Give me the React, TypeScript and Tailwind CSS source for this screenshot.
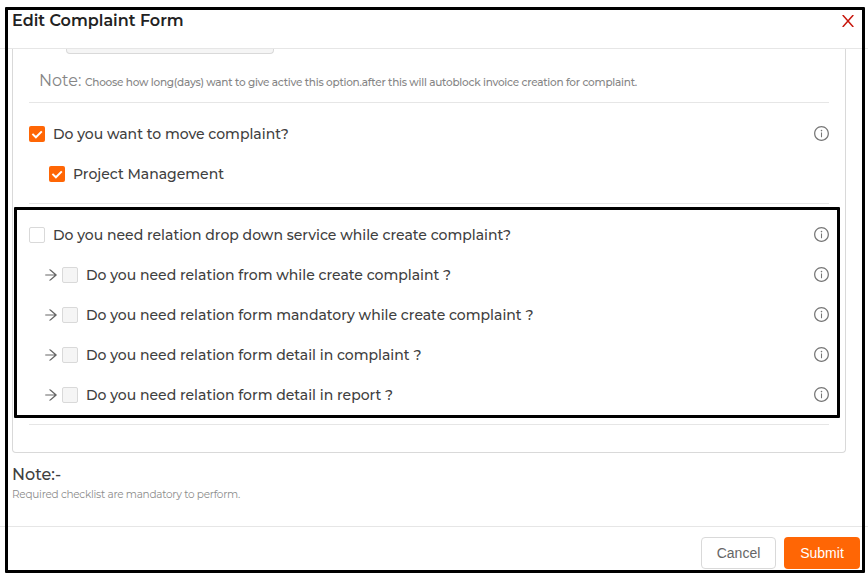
import { AiOutlineArrowRight, AiOutlineInfoCircle } from "react-icons/ai";

function Checkbox({ state }: { state: "checked" | "empty" | "disabled" }) {
  if (state === "checked") {
    return (
      <span className="flex size-4 shrink-0 items-center justify-center rounded-[2px] bg-[#ff6605]">
        <svg viewBox="0 0 16 16" className="size-4" fill="none" stroke="#fff" strokeWidth="2">
          <path d="M3.4 7.9 6.9 11.3 12.8 5.4" />
        </svg>
      </span>
    );
  }
  return (
    <span
      className={
        state === "empty"
          ? "size-4 shrink-0 rounded-[2px] border border-[#d9d9d9] bg-white"
          : "size-4 shrink-0 rounded-[2px] border border-[#d9d9d9] bg-[#f5f5f5]"
      }
    />
  );
}

type RowProps = {
  label: string;
  state: "checked" | "empty" | "disabled";
  indent?: string;
  arrow?: boolean;
  info?: boolean;
};

function Row({ label, state, indent = "", arrow = false, info = true }: RowProps) {
  return (
    <div className={`flex h-10 items-center ${indent}`}>
      {arrow && <AiOutlineArrowRight className="mr-[3px] size-4 shrink-0 text-[#666]" />}
      <Checkbox state={state} />
      <span className="ml-2 text-[14px] font-medium whitespace-nowrap text-[#404040]">{label}</span>
      {info && <AiOutlineInfoCircle className="-mr-px mb-px ml-auto size-[17px] text-[#777]" />}
    </div>
  );
}

const relationRows = [
  "Do you need relation from while create complaint ?",
  "Do you need relation form mandatory while create complaint ?",
  "Do you need relation form detail in complaint ?",
  "Do you need relation form detail in report ?",
];

export default function App() {
  return (
    <div className="relative flex h-[575px] w-[868px] flex-col overflow-hidden bg-white font-[Montserrat,Inter,sans-serif]">
      <header className="flex h-[49px] shrink-0 items-start justify-between border-b border-[#e6e6e6] pt-[11px] pr-[14px] pl-3">
        <h1 className="text-[16px] leading-5 font-semibold text-[#222]">Edit Complaint Form</h1>
        <svg viewBox="0 0 12 12" className="mt-1 h-3 w-3" fill="none" stroke="#c8170d" strokeWidth="1.5">
          <path d="M.7 0 11.3 12M11.3 0 .7 12" />
        </svg>
      </header>

      <main className="h-[477px] shrink-0 px-3">
        <section className="flex h-[404px] w-[834px] flex-col rounded-b-[4px] border-x border-b border-[#d9d9d9] px-4">
          <div className="ml-[37px] h-[5px] w-[208px] shrink-0 rounded-b-[4px] border-x border-b border-[#d9d9d9] bg-[#f5f5f5]" />
          <p className="flex h-[49px] shrink-0 items-baseline border-b border-[#e6e6e6] pt-[15px] pl-[10px] whitespace-nowrap text-[#858585]">
            <span className="w-[46px] text-[16px] leading-6">Note:</span>
            <span className="text-[10.5px] font-medium tracking-[-0.24px]">
              Choose how long(days) want to give active this option.after this will autoblock invoice creation for complaint.
            </span>
          </p>

          <div className="shrink-0 border-b border-[#e6e6e6] pt-[11px] pb-[9px]">
            <Row label="Do you want to move complaint?" state="checked" />
            <Row label="Project Management" state="checked" indent="pl-5" info={false} />
          </div>

          <div className="shrink-0 border-b border-[#e6e6e6] pt-[11px] pb-[9px]">
            <Row label="Do you need relation drop down service while create complaint?" state="empty" />
            {relationRows.map((label) => (
              <Row key={label} label={label} state="disabled" indent="pl-[14px]" arrow />
            ))}
          </div>
        </section>

        <p className="mt-[10px] text-[16px] leading-6 font-medium text-[#404040]">Note:-</p>
        <p className="text-[10.5px] leading-4 tracking-[-0.26px] text-[#8c8c8c]">
          Required checklist are mandatory to perform.
        </p>
      </main>

      <footer className="flex h-[49px] shrink-0 items-start justify-end gap-2 border-t border-[#e6e6e6] pt-[10px] pr-2 font-[Liberation_Sans,sans-serif] text-[14px]">
        <button className="h-8 w-[75px] rounded-[4px] border border-[#d9d9d9] bg-white text-[#666]">Cancel</button>
        <button className="h-8 w-[76px] rounded-[4px] bg-[#ff6605] text-white">Submit</button>
      </footer>

      <div className="pointer-events-none absolute top-[7px] left-[5px] h-[566px] w-[860px] rounded-[1px] border-3 border-black" />
      <div className="pointer-events-none absolute top-[207px] left-[14px] h-[211px] w-[826px] rounded-[1px] border-3 border-black" />
    </div>
  );
}
